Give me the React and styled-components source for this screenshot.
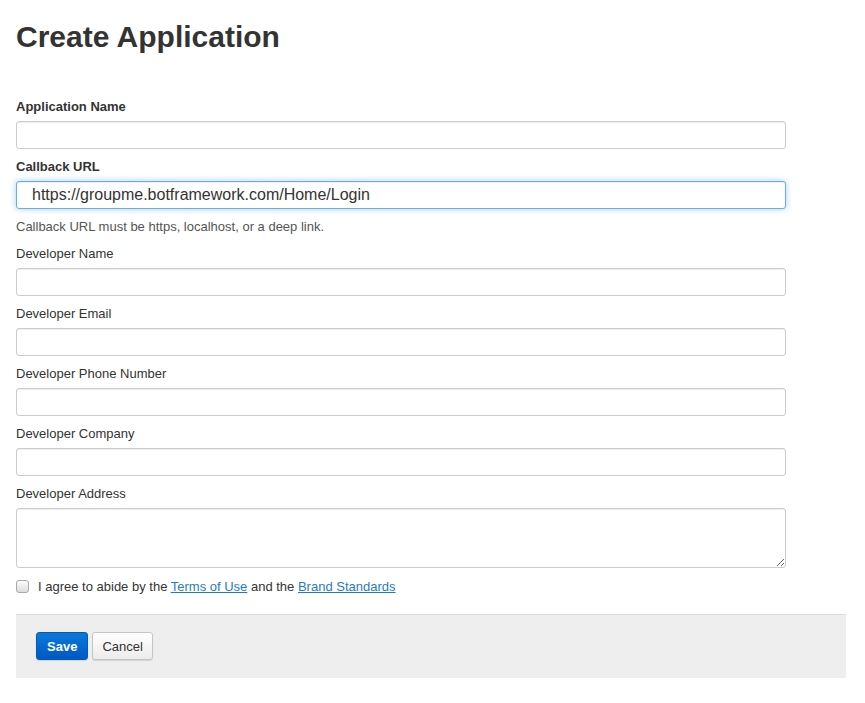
import styled, { createGlobalStyle } from "styled-components"

const GlobalStyle = createGlobalStyle`
    html, body {
        margin: 0;
        padding: 0;
        background: #fff;
    }
    body {
        font-family: "Liberation Sans", Arial, Helvetica, sans-serif;
        font-size: 13px;
        color: #333;
    }
`

const Page = styled.div`
    width: 830px;
    padding: 0 0 0 16px;
`

const Title = styled.h1`
    margin: 20px 0 45px 0;
    font-size: 30px;
    line-height: 33px;
    font-weight: bold;
    color: #333;
`

const Form = styled.form`
    display: flex;
    flex-direction: column;
    width: 770px;
`

const Group = styled.div`
    display: flex;
    flex-direction: column;
    margin-bottom: ${(p) => (p.$tight ? "0" : "9px")};
`

const Label = styled.label`
    display: block;
    font-size: 13px;
    line-height: 18px;
    font-weight: ${(p) => (p.$bold ? "bold" : "normal")};
    color: #333;
    margin-bottom: 5px;
`

const Input = styled.input`
    box-sizing: border-box;
    width: 100%;
    height: 28px;
    margin: 0;
    padding: 0 12px 0 ${(p) => p.$indent || 12}px;
    font-family: "Liberation Sans", Arial, sans-serif;
    font-size: 16px;
    color: #333;
    background: #fff;
    border: 1px solid ${(p) => (p.$focused ? "#66afe9" : "#ccc")};
    border-radius: 3px;
    box-shadow: ${(p) =>
        p.$focused
            ? "inset 0 1px 1px rgba(0,0,0,.075), 0 0 6px rgba(102,175,233,.6)"
            : "inset 0 1px 1px rgba(0,0,0,.075)"};
    outline: none;
`

const TextArea = styled.textarea`
    box-sizing: border-box;
    width: 100%;
    height: 60px;
    margin: 0;
    padding: 6px 12px;
    font-family: "Liberation Sans", Arial, sans-serif;
    font-size: 13px;
    border: 1px solid #ccc;
    border-radius: 3px;
    box-shadow: inset 0 1px 1px rgba(0,0,0,.075);
    outline: none;
    display: block;
`

const Help = styled.p`
    margin: 9px 0 9px;
    font-size: 13px;
    line-height: 18px;
    color: #555;
`

const AgreeRow = styled.div`
    display: flex;
    align-items: center;
    gap: 9px;
    margin-top: 5px;
    height: 26px;
    font-size: 13px;
    color: #333;
`

const Check = styled.input`
    appearance: none;
    box-sizing: border-box;
    width: 13px;
    height: 13px;
    margin: 0;
    border: 1px solid #a9a9a9;
    border-radius: 3px;
    background: linear-gradient(#fdfdfd, #dcdcdc);
`

const Link = styled.a`
    color: #1f7bc8;
    text-decoration: underline;
`

const Footer = styled.div`
    display: flex;
    gap: 4px;
    margin-top: 15px;
    padding: 17px 20px 18px;
    background: #eeeeee;
    border-top: 1px solid #dddddd;
`

const Button = styled.button`
    height: 28px;
    padding: 0 ${(p) => (p.$primary ? "10px" : "9px")};
    font-family: "Liberation Sans", Arial, sans-serif;
    font-size: 13px;
    font-weight: ${(p) => (p.$primary ? "bold" : "normal")};
    color: ${(p) => (p.$primary ? "#fff" : "#333")};
    background: ${(p) =>
        p.$primary
            ? "linear-gradient(#0a7ad9, #0058c4)"
            : "linear-gradient(#ffffff, #ececec)"};
    border: 1px solid ${(p) => (p.$primary ? "#0458b8" : "#c5c5c5")};
    border-radius: 3px;
    box-shadow: 0 1px 1px rgba(0,0,0,.12);
    cursor: pointer;
`

const fields = [
    { label: "Developer Name" },
    { label: "Developer Email" },
    { label: "Developer Phone Number" },
    { label: "Developer Company" },
]

export default function App() {
    return (
        <Page>
            <GlobalStyle />
            <Title>Create Application</Title>
            <Form onSubmit={(e) => e.preventDefault()}>
                <Group>
                    <Label $bold>Application Name</Label>
                    <Input type="text" />
                </Group>
                <Group $tight>
                    <Label $bold>Callback URL</Label>
                    <Input
                        type="text"
                        $focused
                        $indent={15}
                        defaultValue="https://groupme.botframework.com/Home/Login"
                    />
                </Group>
                <Help>Callback URL must be https, localhost, or a deep link.</Help>
                {fields.map((f) => (
                    <Group key={f.label}>
                        <Label>{f.label}</Label>
                        <Input type="text" />
                    </Group>
                ))}
                <Group $tight>
                    <Label>Developer Address</Label>
                    <TextArea />
                </Group>
                <AgreeRow>
                    <Check type="checkbox" />
                    <span>
                        I agree to abide by the <Link href="#">Terms of Use</Link> and the{" "}
                        <Link href="#">Brand Standards</Link>
                    </span>
                </AgreeRow>
            </Form>
            <Footer>
                <Button $primary>Save</Button>
                <Button>Cancel</Button>
            </Footer>
        </Page>
    )
}
